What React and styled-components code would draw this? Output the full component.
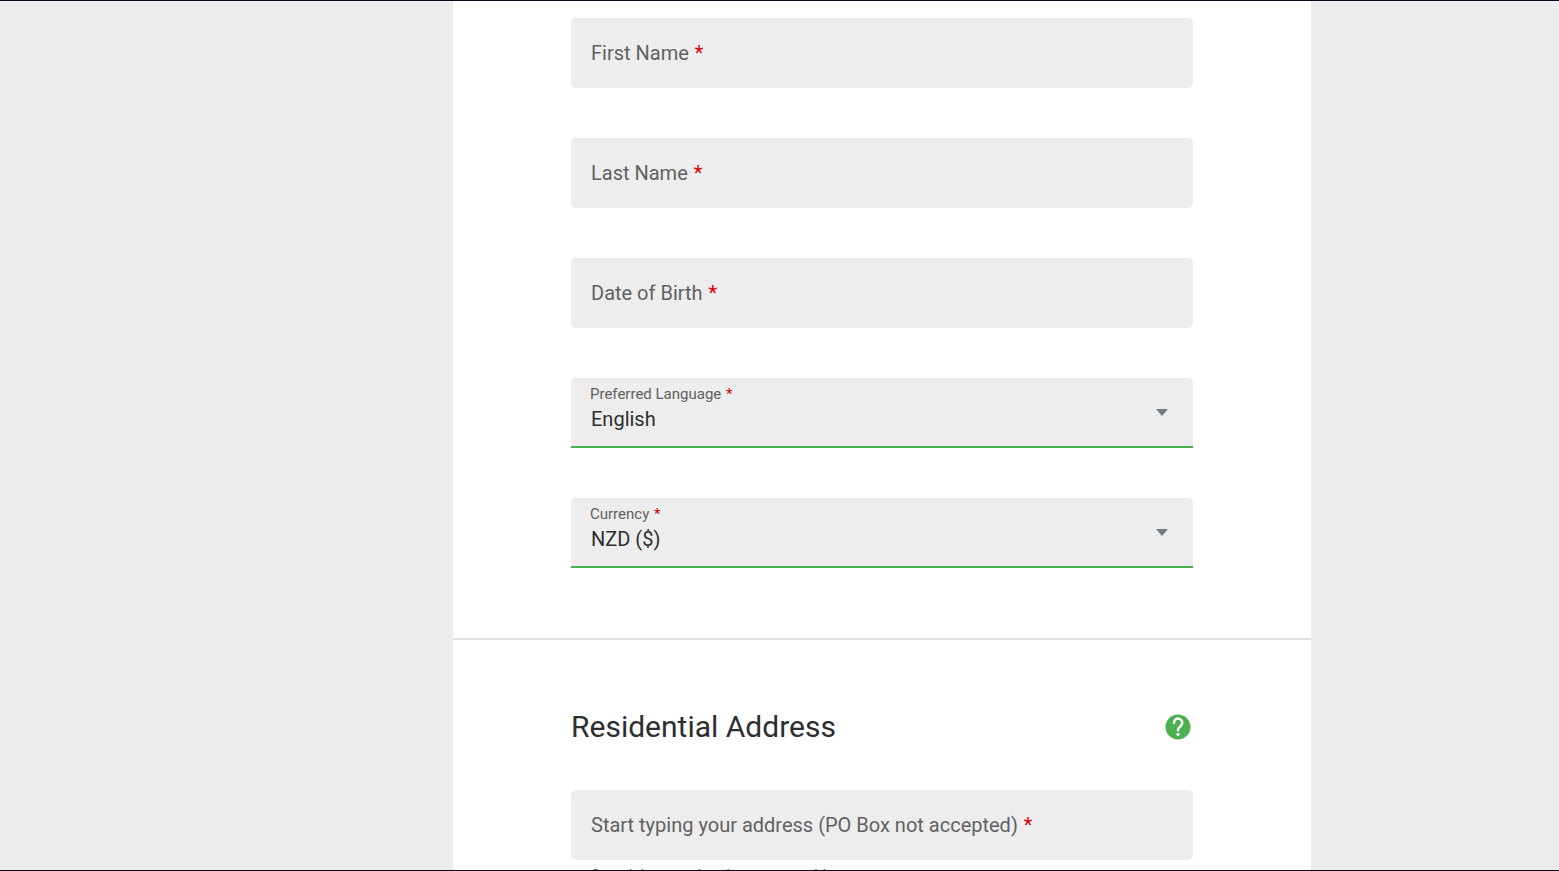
import React from "react";
import styled, { createGlobalStyle, css } from "styled-components";

const GlobalStyle = createGlobalStyle`
  *, *::before, *::after { box-sizing: border-box; }
  body {
    margin: 0;
    font-family: Roboto, "Liberation Sans", sans-serif;
    color: #2e2e30;
    background: #ececec;
  }
`;

const Page = styled.div`
  display: grid;
  grid-template-columns: 453fr 858fr 248fr;
  height: 100vh;
  overflow: hidden;
  border-top: 1px solid #08081c;
  border-bottom: 1px solid #08081c;
`;

const Form = styled.form`
  grid-column: 2;
  background: #fff;
`;

const Section = styled.section`
  display: flex;
  flex-direction: column;
  gap: 50px;
  padding: ${(p) => (p.$first ? "17px 118px 70px" : "64px 118px")};

  & + & {
    border-top: 2px solid #e0e0e0;
    gap: 40px;
  }
`;

const SectionHeader = styled.header`
  display: flex;
  align-items: center;
  justify-content: space-between;
  height: 46px;
`;

const Title = styled.h2`
  margin: 0;
  font-size: 30px;
  font-weight: 400;
  line-height: 46px;
`;

const HelpButton = styled.button`
  display: flex;
  padding: 0;
  border: 0;
  background: none;
  cursor: pointer;
`;

const Field = styled.div`
  position: relative;
`;

const controlStyle = css`
  display: block;
  width: 100%;
  height: 70px;
  margin: 0;
  border: 0;
  border-radius: 5px;
  outline: 0;
  background: #ededed;
  color: #2e2e30;
  font: 400 20px Roboto, "Liberation Sans", sans-serif;
`;

const Input = styled.input`
  ${controlStyle}
  padding: 0 20px;
`;

const Select = styled.select`
  ${controlStyle}
  appearance: none;
  padding: 14px 48px 0 20px;
  border-bottom: 2px solid #4caf50;
  border-radius: 5px 5px 0 0;
`;

const Label = styled.label`
  position: absolute;
  pointer-events: none;
  color: #616161;
  left: ${(p) => (p.$floating ? "19px" : "20px")};
  top: ${(p) => (p.$floating ? "6px" : "20px")};
  font-size: ${(p) => (p.$floating ? "15px" : "20px")};
  line-height: ${(p) => (p.$floating ? "20px" : "30px")};
`;

const Required = styled.span`
  margin-left: 1px;
  color: #d50000;
`;

const Arrow = styled.svg`
  position: absolute;
  right: 25px;
  top: 31px;
  pointer-events: none;
`;

const Hint = styled.p`
  margin: 5px 20px 0;
  color: #616161;
  font-size: 15px;
  line-height: 20px;
`;

function TextField({ id, label, hint }) {
  return (
    <Field>
      <Input id={id} type="text" required aria-describedby={hint && `${id}-hint`} />
      <Label htmlFor={id}>
        {label} <Required>*</Required>
      </Label>
      {hint && <Hint id={`${id}-hint`}>{hint}</Hint>}
    </Field>
  );
}

function SelectField({ id, label, options }) {
  return (
    <Field>
      <Select id={id} required>
        {options.map((option) => (
          <option key={option}>{option}</option>
        ))}
      </Select>
      <Label htmlFor={id} $floating>
        {label} <Required>*</Required>
      </Label>
      <Arrow width="12" height="7" viewBox="0 0 12 7" aria-hidden="true">
        <path d="M0 0h12L6 7z" fill="#757b7f" />
      </Arrow>
    </Field>
  );
}

export default function App() {
  return (
    <>
      <GlobalStyle />
      <Page>
        <Form>
          <Section $first>
            <TextField id="first-name" label="First Name" />
            <TextField id="last-name" label="Last Name" />
            <TextField id="birth-date" label="Date of Birth" />
            <SelectField id="language" label="Preferred Language" options={["English"]} />
            <SelectField id="currency" label="Currency" options={["NZD ($)"]} />
          </Section>
          <Section>
            <SectionHeader>
              <Title>Residential Address</Title>
              <HelpButton type="button" aria-label="Help">
                <svg width="30" height="30" viewBox="0 0 24 24" aria-hidden="true">
                  <circle cx="12" cy="12" r="10" fill="#4caf50" />
                  <path
                    d="M8.8 8.6a3.3 3.3 0 1 1 5.7 2.2c-1.2 1.2-2.5 1.8-2.5 3.8"
                    fill="none"
                    stroke="#fff"
                    strokeWidth="2"
                    strokeLinecap="round"
                  />
                  <circle cx="12" cy="17.8" r="1.3" fill="#fff" />
                </svg>
              </HelpButton>
            </SectionHeader>
            <TextField
              id="address"
              label="Start typing your address (PO Box not accepted)"
              hint="Search by postal code or street address"
            />
          </Section>
        </Form>
      </Page>
    </>
  );
}
